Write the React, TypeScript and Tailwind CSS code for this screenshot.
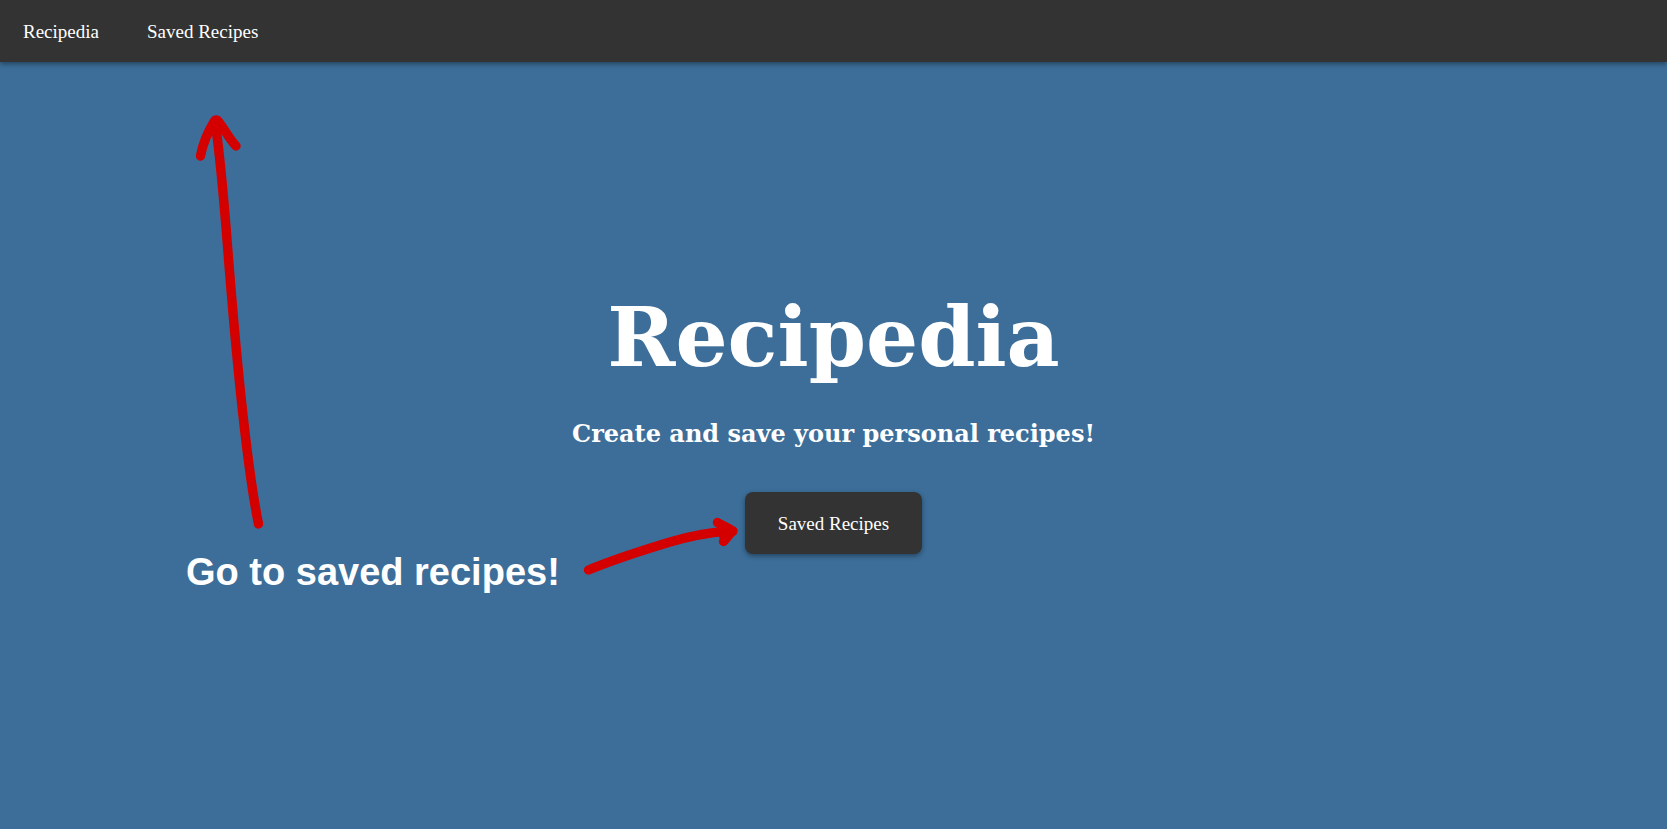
function Annotation() {
  return (
    <div className="pointer-events-none absolute left-0 top-0">
      <svg
        className="block h-[560px] w-[760px]"
        viewBox="0 0 760 560"
        fill="none"
        stroke="#d40000"
        strokeWidth="9.4"
        strokeLinecap="round"
        strokeLinejoin="round"
        aria-hidden="true"
      >
        <path d="M258.500 462 C247 405 236 290 229 203 C225 152 222 110 216 66" />
        <path d="M200.500 94 C203 80 209 68 214.500 59 C215.500 57.500 217 57.500 218 59 C224 66 229 77 236 84" />
        <path d="M588.500 508 C610 499 637 490 670 480 C690 474 704 471 728 469" />
        <path d="M717.500 460.500 C722 463 728 466 733 469 C729 472 727 476 723.500 479.500 M722 465 L724 475" />
      </svg>
      <p className="absolute left-[186px] top-[486px] whitespace-nowrap font-['Liberation_Sans',Arial,sans-serif] text-[38px] font-bold leading-[48px] text-white">
        Go to saved recipes!
      </p>
    </div>
  );
}

export default function App() {
  return (
    <div className="flex min-h-screen flex-col bg-[#3c6e99] font-[Georgia,'Liberation_Serif',serif] text-white">
      <header className="relative z-10 bg-[#333333] shadow-[0_2px_5px_rgba(0,0,0,0.4)]">
        <nav className="flex gap-0.5 text-[19px] leading-[22px]">
          <a href="#home" className="px-[23px] pb-[19px] pt-[21px]">
            Recipedia
          </a>
          <a href="#saved" className="px-[23px] pb-[19px] pt-[21px]">
            Saved Recipes
          </a>
        </nav>
      </header>
      <main className="relative flex flex-1 flex-col items-center pt-[221px]">
        <h1 className="font-[Georgia,'DejaVu_Serif',serif] text-[82px] font-bold leading-[108px]">
          Recipedia
        </h1>
        <h2 className="mt-[26px] font-[Georgia,'DejaVu_Serif',serif] text-[24px] font-bold leading-[34px]">
          Create and save your personal recipes!
        </h2>
        <button
          type="button"
          className="mt-[41px] rounded-lg bg-[#333333] px-[33px] pb-[19px] pt-[21px] text-[19px] leading-[22px] shadow-[0_2px_5px_rgba(0,0,0,0.4)]"
        >
          Saved Recipes
        </button>
        <Annotation />
      </main>
    </div>
  );
}
